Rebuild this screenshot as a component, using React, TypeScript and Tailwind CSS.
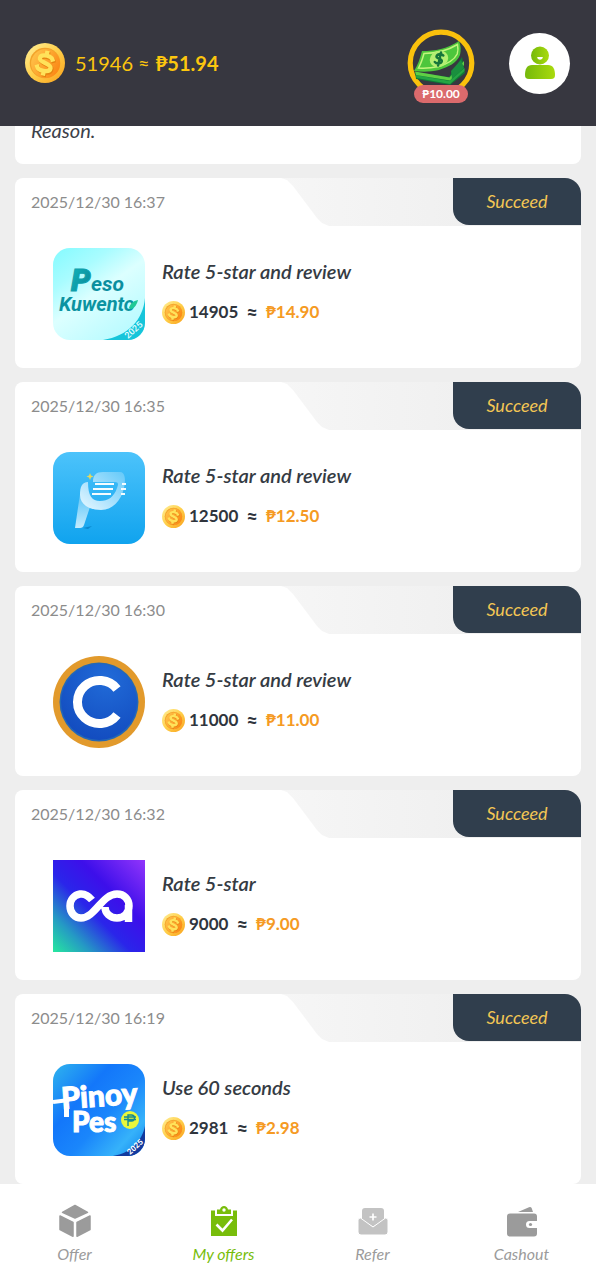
import type { ReactNode } from 'react';

function Coin({ className }: { className: string }) {
  return (
    <svg viewBox="0 0 40 40" className={className} aria-hidden="true">
      <defs>
        <linearGradient id="coinRim" x1="0" y1="0" x2="1" y2="1">
          <stop offset="0" stopColor="#fff09a" />
          <stop offset="0.5" stopColor="#ffcf4a" />
          <stop offset="1" stopColor="#f9a01b" />
        </linearGradient>
        <linearGradient id="coinFace" x1="0" y1="0" x2="1" y2="0.6">
          <stop offset="0" stopColor="#ffc94f" />
          <stop offset="1" stopColor="#fb8a17" />
        </linearGradient>
      </defs>
      <circle cx="20" cy="20" r="20" fill="url(#coinRim)" />
      <circle cx="20" cy="20" r="15.3" fill="#f2a32a" />
      <circle cx="20.6" cy="20.6" r="14.5" fill="url(#coinFace)" />
      <g transform="rotate(12 20 20)" fill="none" strokeLinecap="square">
        <path
          d="M26.500 15c-1-1.800-3-2.500-6-2.500-4 0-6.500 1.200-6.500 3.800 0 4.700 12.500 2.700 12.500 7.700 0 2.900-3 4-6.500 4-3.200 0-5.700-.7-6.800-2.700M20 9.800v2M20.500 28.500v2"
          stroke="#e58410"
          strokeWidth="4.500"
          transform="translate(1 1)"
        />
        <path
          d="M26.500 15c-1-1.800-3-2.500-6-2.500-4 0-6.500 1.200-6.500 3.800 0 4.700 12.500 2.700 12.500 7.700 0 2.900-3 4-6.500 4-3.200 0-5.700-.7-6.800-2.700M20 9.800v2M20.500 28.500v2"
          stroke="#ffe25a"
          strokeWidth="4.300"
        />
      </g>
    </svg>
  );
}

function CashRing() {
  return (
    <svg viewBox="0 0 68 68" className="size-[68px]" aria-hidden="true">
      <circle cx="34" cy="34" r="30.800" fill="none" stroke="#fac10c" strokeWidth="5.200" />
      <path d="M8 43l34 5 13-20 3 16-15 12-34-6z" fill="#0f7a35" />
      <path d="M8.500 46l34 6 15-13v3L43 55 9.500 49z" fill="#25a544" />
      <path d="M8 42.500l34.500 6L57 32v4L43 51.500 9 46z" fill="#5fcf45" />
      <path d="M44 42l10-11 3 8-12 11z" fill="#1a8f3e" />
      <path d="M15 22c14 0 24-2 37-10 2 5 2 9 1 14-3 8-12 12-21 15-9 2-17 2-25 1 4-6 6-13 8-20z" fill="#4dc63c" />
      <path d="M17 24.500c12 0 22-2 33.500-9 .8 4 .5 7-.3 9.500-3 6-10 10-18.700 12.500-7 1.500-13 2-20 1.500 2.500-4.500 4-9 5.500-14.500z" fill="none" stroke="#c2f57d" strokeWidth="1.500" />
      <ellipse cx="32" cy="30" rx="9.500" ry="8" fill="#b4ef72" transform="rotate(-25 32 30)" />
      <path d="M36.300 26.500c-1.500-2-6.300-1.500-6.800 1-.4 2.500 5.800 2 5.300 4.800-.6 2.700-5.300 2.700-7 .7M34 23.500l-2.900 13" fill="none" stroke="#15753a" strokeWidth="2.500" strokeLinecap="round" />
    </svg>
  );
}

function PersonIcon() {
  return (
    <svg viewBox="0 0 32 34" className="h-[34px] w-8" aria-hidden="true">
      <defs>
        <linearGradient id="person" x1="0" y1="0" x2="1" y2="0">
          <stop offset="0" stopColor="#75b90b" />
          <stop offset="1" stopColor="#a9da0d" />
        </linearGradient>
      </defs>
      <circle cx="16" cy="9.500" r="9" fill="url(#person)" />
      <path d="M13.200 11h5.600c0 3.600-5.600 3.600-5.600 0z" fill="#fff" />
      <path d="M8 19h16c5 0 7 4 7 10 0 2.600-1 4-4 4H5c-3 0-4-1.400-4-4 0-6 2-10 7-10z" fill="url(#person)" />
    </svg>
  );
}

function PesoKuwentoLogo() {
  return (
    <svg viewBox="0 0 92 92" className="size-[92px]" role="img" aria-label="Peso Kuwento">
      <defs>
        <linearGradient id="pkBg" x1="0" y1="0" x2="0.7" y2="1">
          <stop offset="0" stopColor="#83fbff" />
          <stop offset="0.300" stopColor="#a9fcff" />
          <stop offset="0.550" stopColor="#dcffff" />
          <stop offset="1" stopColor="#b9fbff" />
        </linearGradient>
        <linearGradient id="pkText" x1="0" y1="0" x2="1" y2="1">
          <stop offset="0" stopColor="#12b9bd" />
          <stop offset="1" stopColor="#087f92" />
        </linearGradient>
        <clipPath id="pkClip">
          <rect width="92" height="92" rx="17" />
        </clipPath>
      </defs>
      <g clipPath="url(#pkClip)">
        <rect width="92" height="92" fill="url(#pkBg)" />
        <path d="M92 50c-2 22-17 38-42 42h42z" fill="#16c5da" />
        <text x="18" y="43" fontFamily="Roboto" fontWeight="900" fontStyle="italic" fontSize="31" fill="url(#pkText)" stroke="#0ea0ab" strokeWidth="1">P</text>
        <text x="38" y="43" fontFamily="Roboto" fontWeight="700" fontStyle="italic" fontSize="21" fill="#0b8f9f">eso</text>
        <text x="6" y="63" fontFamily="Roboto" fontWeight="700" fontStyle="italic" fontSize="20" fill="#0b93a1">Kuwento</text>
        <path d="M76 60c1-4 4-7 9-8-1 4-3 8-7 9z" fill="#1fc996" />
        <text x="75" y="91" fontFamily="Roboto" fontWeight="500" fontSize="9" fill="#e8ffff" transform="rotate(-42 75 91)">2025</text>
      </g>
    </svg>
  );
}

function BluePLogo() {
  return (
    <svg viewBox="0 0 92 92" className="size-[92px]" role="img" aria-label="Peso loan app">
      <defs>
        <linearGradient id="bpBg" x1="0" y1="0" x2="0" y2="1">
          <stop offset="0" stopColor="#4cc3fb" />
          <stop offset="1" stopColor="#10a3ee" />
        </linearGradient>
        <linearGradient id="bpBowl" x1="0" y1="1" x2="1" y2="0">
          <stop offset="0" stopColor="#e9f8ff" />
          <stop offset="0.500" stopColor="#a5e0fd" />
          <stop offset="1" stopColor="#64c9f9" />
        </linearGradient>
        <linearGradient id="bpStem" x1="0" y1="0" x2="0" y2="1">
          <stop offset="0" stopColor="#5ac4f7" />
          <stop offset="1" stopColor="#c5ecfe" />
        </linearGradient>
      </defs>
      <rect width="92" height="92" rx="17" fill="url(#bpBg)" />
      <path d="M30 76l9-2-4 3z" fill="#0b87cc" />
      <path d="M27 42l10 13-6 18q-1 3-4 3h-5z" fill="url(#bpStem)" />
      <path d="M40 30c0-7 3-10 10-10h17c5 0 6 7 4 16-3 13-12 22-23 22-12 0-21-6-21-15 0-8 2-13 8-13 0 14 4 19 12 19 8 0 14-4 17-13 2-5 1-6-3-6z" fill="url(#bpBowl)" />
      <path d="M42 32h19M40 37h20M39 42h19M69 32h4M68 37h5M68 42h4" stroke="#f5fcff" strokeWidth="2" />
      <path d="M37 21l1 2.500 2.500 1-2.500 1-1 2.500-1-2.500-2.500-1 2.500-1z" fill="#e7d95b" />
    </svg>
  );
}

function CircleCLogo() {
  return (
    <svg viewBox="0 0 92 92" className="size-[92px]" role="img" aria-label="Coin app">
      <defs>
        <radialGradient id="ccBg" cx="0.600" cy="0.200" r="0.900">
          <stop offset="0" stopColor="#216bd8" />
          <stop offset="1" stopColor="#1149bd" />
        </radialGradient>
      </defs>
      <circle cx="46" cy="46" r="46" fill="#e29a2c" />
      <circle cx="46" cy="46" r="39.500" fill="#2468b5" />
      <circle cx="46" cy="46" r="38" fill="url(#ccBg)" />
      <path d="M64 33A22 21.500 0 1 0 64 59" fill="none" stroke="#fff" strokeWidth="9" />
    </svg>
  );
}

function InfinityLogo() {
  return (
    <svg viewBox="0 0 92 92" className="size-[92px]" role="img" aria-label="CA app">
      <defs>
        <linearGradient id="ifBg" x1="0" y1="1" x2="1" y2="0">
          <stop offset="0" stopColor="#26e89e" />
          <stop offset="0.200" stopColor="#259ac4" />
          <stop offset="0.430" stopColor="#2a25ea" />
          <stop offset="0.650" stopColor="#3d0fea" />
          <stop offset="1" stopColor="#9235fb" />
        </linearGradient>
      </defs>
      <rect width="92" height="92" fill="url(#ifBg)" />
      <path
        d="M39 40C35 35 31 33.500 27 34c-6 1-10 6-10 12 0 7 5 12 11 12 14 0 21-24 36-24 7 0 12 5 12 12s-5 12-12 12-12-5-12-11M75.500 45v17"
        fill="none"
        stroke="#fff"
        strokeWidth="7.500"
      />
    </svg>
  );
}

function PinoyPesoLogo() {
  return (
    <svg viewBox="0 0 92 92" className="size-[92px]" role="img" aria-label="Pinoy Peso">
      <defs>
        <linearGradient id="ppBg" x1="0" y1="0" x2="1" y2="0.900">
          <stop offset="0" stopColor="#2fb4ee" />
          <stop offset="0.350" stopColor="#1377fa" />
          <stop offset="0.600" stopColor="#1a86fb" />
          <stop offset="0.850" stopColor="#36b2fa" />
          <stop offset="1" stopColor="#168cf0" />
        </linearGradient>
        <clipPath id="ppClip">
          <rect width="92" height="92" rx="17" />
        </clipPath>
      </defs>
      <g clipPath="url(#ppClip)">
        <rect width="92" height="92" fill="url(#ppBg)" />
        <path d="M92 62c-3 15-14 27-32 30h32z" fill="#123a9e" />
        <path d="M0 38l16-2" stroke="#fff" strokeWidth="4" />
        <path d="M13.500 40v13" stroke="#fff" strokeWidth="5" />
        <text x="9" y="45" fontFamily="Lato" fontWeight="900" fontSize="30" fill="#fff" stroke="#fff" strokeWidth="1" transform="rotate(-4 9 45)">Pinoy</text>
        <text x="19" y="68" fontFamily="Lato" fontWeight="900" fontSize="28" fill="#fff" stroke="#fff" strokeWidth="1">Pes</text>
        <circle cx="77" cy="56" r="9" fill="#e9f73c" />
        <path d="M75 62V51h3.500a3 3 0 0 1 0 6H75M71 53h12M71 55.500h12" stroke="#168a8e" strokeWidth="1.400" fill="none" />
        <text x="77" y="91" fontFamily="Roboto" fontWeight="700" fontSize="8" fill="#fff" transform="rotate(-42 77 91)">2025</text>
      </g>
    </svg>
  );
}

type Offer = {
  time: string;
  title: string;
  coins: string;
  pesos: string;
  logo: ReactNode;
};

const offers: Offer[] = [
  { time: '2025/12/30 16:37', title: 'Rate 5-star and review', coins: '14905', pesos: '₱14.90', logo: <PesoKuwentoLogo /> },
  { time: '2025/12/30 16:35', title: 'Rate 5-star and review', coins: '12500', pesos: '₱12.50', logo: <BluePLogo /> },
  { time: '2025/12/30 16:30', title: 'Rate 5-star and review', coins: '11000', pesos: '₱11.00', logo: <CircleCLogo /> },
  { time: '2025/12/30 16:32', title: 'Rate 5-star', coins: '9000', pesos: '₱9.00', logo: <InfinityLogo /> },
  { time: '2025/12/30 16:19', title: 'Use 60 seconds', coins: '2981', pesos: '₱2.98', logo: <PinoyPesoLogo /> },
];

function OfferCard({ offer }: { offer: Offer }) {
  return (
    <article className="shrink-0 overflow-hidden rounded-lg rounded-tr-2xl bg-white">
      <header className="flex h-12 items-start justify-between">
        <time className="pl-4 text-[16px] leading-[47px] text-[#8c8c8c]">{offer.time}</time>
        <div className="flex h-12 w-[300px] justify-end bg-linear-to-r from-[#f6f6f6] to-[#ececec] [clip-path:polygon(0_0,6px_2px,12px_8px,36px_40px,41px_45px,48px_48px,100%_48px,100%_0)]">
          <span className="h-[47px] w-32 rounded-bl-2xl bg-[#303e4d] text-center text-[18px] leading-[47px] text-[#f3c654] italic">
            Succeed
          </span>
        </div>
      </header>
      <div className="flex items-start gap-[17px] pt-[22px] pb-7 pl-[38px]">
        {offer.logo}
        <div className="flex flex-col gap-[13px] pt-[9px]">
          <h2 className="text-[20px] leading-7 font-semibold text-[#353b43] italic">{offer.title}</h2>
          <p className="flex items-center text-[17px] leading-7 font-bold text-[#2f353d]">
            <Coin className="mr-1 size-[23px]" />
            <span>{offer.coins}</span>
            <span className="mx-2 text-[20px]">≈</span>
            <span className="text-[#f59a23]">{offer.pesos}</span>
          </p>
        </div>
      </div>
    </article>
  );
}

function BoxIcon() {
  return (
    <svg viewBox="0 0 34 34" className="size-[34px]" fill="currentColor" stroke="currentColor" strokeWidth="1.500" strokeLinejoin="round" aria-hidden="true">
      <path d="M17 1.500l12.500 6.800L17 14 4.500 8.300z" />
      <path d="M2 12l13 6.300v14L2 25.500z" />
      <path d="M32 12l-13 6.300v14l13-6.800z" />
    </svg>
  );
}

function ClipboardIcon() {
  return (
    <svg viewBox="0 0 34 34" className="size-[34px]" aria-hidden="true">
      <path d="M4 6.500h4v5.500h18V6.500h4V32H4z" fill="currentColor" />
      <path d="M10 10V5.500h3c.5-2 2-3.500 4-3.500s3.500 1.500 4 3.500h3V10z" fill="currentColor" />
      <circle cx="17" cy="6" r="1.700" fill="#fff" />
      <path d="M9.500 20.500l6 6 9.500-11" stroke="#fff" strokeWidth="2.600" fill="none" />
    </svg>
  );
}

function EnvelopeIcon() {
  return (
    <svg viewBox="0 0 34 34" className="size-[34px] text-[#c3c3c3]" fill="currentColor" aria-hidden="true">
      <path d="M9 4h16q3 0 3 3v9l-11 6.500L6 16V7q0-3 3-3z" />
      <path d="M2 16q0-2 2.500-2l12.500 9 12.500-9q2.500 0 2.500 2v12q0 3-3 3H5q-3 0-3-3z" stroke="#fff" strokeWidth="1" />
      <path d="M17 9.500v7M13.500 13h7" stroke="#fff" strokeWidth="1.700" />
    </svg>
  );
}

function WalletIcon() {
  return (
    <svg viewBox="0 0 34 34" className="size-[34px]" fill="currentColor" aria-hidden="true">
      <path d="M13 8L24 3.200q2-.7 2.800 1.300L28 8z" />
      <path d="M5 9.500h24q3 0 3 3V17h-7.500a3.500 3.500 0 0 0 0 7H32v5.500q0 3-3 3H5q-3 0-3-3v-17q0-3 3-3z" />
      <circle cx="25.500" cy="20.500" r="1.600" />
    </svg>
  );
}

const tabs = [
  { label: 'Offer', icon: <BoxIcon />, active: false },
  { label: 'My offers', icon: <ClipboardIcon />, active: true },
  { label: 'Refer', icon: <EnvelopeIcon />, active: false },
  { label: 'Cashout', icon: <WalletIcon />, active: false },
];

export default function App() {
  return (
    <div className="flex h-dvh flex-col overflow-hidden bg-[#eeeeee] font-[Lato,sans-serif]">
      <header className="z-10 flex h-[126px] shrink-0 items-center bg-[#373740] pr-[26px] pl-[25px]">
        <Coin className="size-10" />
        <p className="ml-[10px] flex gap-[6px] text-[20px] leading-8 text-[#fcc60e]">
          <span>51946 ≈</span>
          <strong>₱51.94</strong>
        </p>
        <button type="button" className="relative ml-auto" aria-label="Bonus ₱10.00">
          <CashRing />
          <span className="absolute -bottom-[6px] left-[7px] h-[18px] w-[54px] rounded-full bg-[#db6a6c] text-center text-[12px] leading-[18px] font-bold text-white">
            ₱10.00
          </span>
        </button>
        <button type="button" aria-label="Profile" className="ml-[34px] grid size-[61px] place-items-center rounded-full bg-white">
          <PersonIcon />
        </button>
      </header>

      <main className="-mt-2 flex min-h-0 flex-1 flex-col gap-[14px] overflow-hidden px-[15px]">
        <section className="shrink-0 rounded-b-lg bg-white px-4 pb-[22px]">
          <p className="text-[20px] leading-6 text-[#3c4149] italic">Reason.</p>
        </section>
        {offers.map((offer) => (
          <OfferCard key={offer.time} offer={offer} />
        ))}
      </main>

      <nav className="z-10 grid h-24 shrink-0 grid-cols-4 bg-white pt-5">
        {tabs.map((tab) => (
          <a
            key={tab.label}
            href="#"
            className={
              tab.active
                ? 'flex flex-col items-center gap-1 text-[#78bd0b]'
                : 'flex flex-col items-center gap-1 text-[#9b9b9b]'
            }
          >
            {tab.icon}
            <span className="text-[16px] leading-6 italic">{tab.label}</span>
          </a>
        ))}
      </nav>
    </div>
  );
}
